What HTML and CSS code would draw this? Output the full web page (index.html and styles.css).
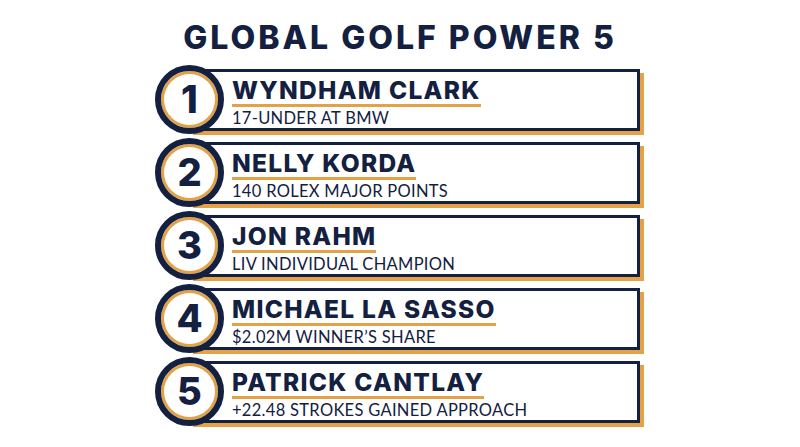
FILE: index.html
```html
<!DOCTYPE html>
<html>
<head>
<meta charset="utf-8">
<link rel="stylesheet" href="styles.css">
</head>
<body>
<div class="page">
  <h1 class="title">GLOBAL GOLF POWER 5</h1>
  <ol class="list">
    <li class="row">
      <div class="badge"><span>1</span></div>
      <div class="card">
        <div class="name">WYNDHAM CLARK</div>
        <div class="stat">17-UNDER AT BMW</div>
      </div>
    </li>
    <li class="row">
      <div class="badge"><span>2</span></div>
      <div class="card">
        <div class="name">NELLY KORDA</div>
        <div class="stat">140 ROLEX MAJOR POINTS</div>
      </div>
    </li>
    <li class="row">
      <div class="badge"><span>3</span></div>
      <div class="card">
        <div class="name">JON RAHM</div>
        <div class="stat">LIV INDIVIDUAL CHAMPION</div>
      </div>
    </li>
    <li class="row">
      <div class="badge"><span>4</span></div>
      <div class="card">
        <div class="name">MICHAEL LA SASSO</div>
        <div class="stat">$2.02M WINNER’S SHARE</div>
      </div>
    </li>
    <li class="row">
      <div class="badge"><span>5</span></div>
      <div class="card">
        <div class="name">PATRICK CANTLAY</div>
        <div class="stat">+22.48 STROKES GAINED APPROACH</div>
      </div>
    </li>
  </ol>
</div>
</body>
</html>
```
FILE: styles.css
```css
* { box-sizing: border-box; }
html, body { margin: 0; padding: 0; background: #ffffff; }
body { width: 800px; height: 447px; overflow: hidden; font-family: "Lato", "DejaVu Sans", sans-serif; color: #13203f; }
.page { display: flex; flex-direction: column; align-items: center; padding-top: 19px; }
.title { margin: 0; font-family: "Inter", "Lato", sans-serif; font-size: 32px; line-height: 38px; font-weight: 800; letter-spacing: 3px; color: #13203f; }
.list { list-style: none; margin: 8px 0 0 0; padding: 0; display: flex; flex-direction: column; gap: 4px; width: 490px; }
.row { display: flex; align-items: center; height: 69px; }
.badge {
  position: relative; z-index: 2;
  width: 69px; height: 69px; flex: 0 0 69px;
  border-radius: 50%;
  border: 6px solid #13203f;
  background: #ffffff;
  box-shadow: inset 0 0 0 3px #e3a247;
  display: flex; align-items: center; justify-content: center;
  margin-right: -35px;
}
.badge span { font-family: "Inter", "Lato", sans-serif; font-size: 38px; font-weight: 800; line-height: 1; margin-top: -1px; }
.card {
  width: 451px; height: 62px;
  border: 3px solid #13203f;
  background: #ffffff;
  box-shadow: 4px 4px 0 #e3a247;
  padding: 4px 0 0 40px;
  display: flex; flex-direction: column; align-items: flex-start;
}
.name { font-family: "Inter", "Lato", sans-serif; font-size: 24.5px; font-weight: 800; line-height: 28px; letter-spacing: 1.3px; border-bottom: 3px solid #e3a247; padding-bottom: 0; }
.stat { font-size: 16.5px; font-weight: 400; line-height: 20px; letter-spacing: 0.3px; margin-top: 1px; }
```
